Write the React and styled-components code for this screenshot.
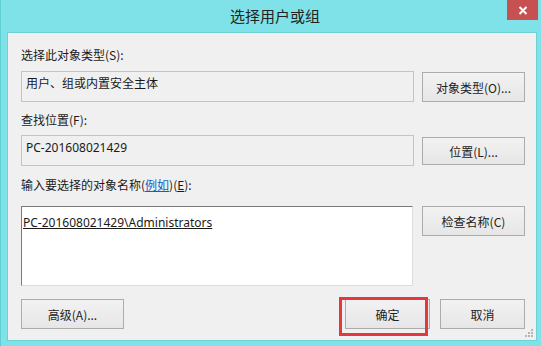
import React from 'react'
import styled, { createGlobalStyle } from 'styled-components'

const GlobalStyle = createGlobalStyle`
  html, body {
    margin: 0;
    padding: 0;
    background: #7fe2e8;
  }
  body {
    font-family: "Noto Sans", "Noto Sans CJK SC", sans-serif;
    font-size: 12px;
    color: #1a1a1a;
  }
`

const Window = styled.div`
  width: 541px;
  height: 346px;
  box-sizing: border-box;
  background: #7fe2e8;
  border-left: 1px solid #5fcfd6;
  display: flex;
  flex-direction: column;
  padding: 0 4px 5px 6px;
`

const TitleBar = styled.div`
  position: relative;
  height: 32px;
  display: flex;
  align-items: center;
  justify-content: center;
  padding-bottom: 1px;
  box-sizing: border-box;
`

const Title = styled.div`
  font-family: "Noto Sans CJK SC", sans-serif;
  font-size: 15px;
  color: #222;
  margin-left: 6px;
`

// 닫기 버튼은 타이틀바 오른쪽 위에 붙어있음
const CloseButton = styled.div`
  position: absolute;
  right: -1px;
  top: 0;
  width: 31px;
  height: 20px;
  background: #c75050;
  display: flex;
  align-items: center;
  justify-content: center;
`

const Client = styled.div`
  flex: 1;
  background: #f0f0f0;
  border: 1px solid #6fd0d6;
  box-sizing: border-box;
  padding: 14px 11px 0 13px;
  position: relative;
`

const Label = styled.div`
  height: 16px;
  line-height: 16px;
  margin-top: ${p => p.top || 0}px;
  font-family: "Noto Sans CJK SC", sans-serif;
  white-space: nowrap;
`

const Link = styled.span`
  color: #0b62c6;
  text-decoration: underline;
`

const Key = styled.span`
  text-decoration: underline;
`

const Row = styled.div`
  display: grid;
  grid-template-columns: 393px 103px;
  column-gap: 8px;
  align-items: start;
  margin-top: ${p => p.top || 0}px;
`

const ReadBox = styled.div`
  height: 31px;
  box-sizing: border-box;
  border: 1px solid #c4c4c4;
  background: #f0f0f0;
  padding: 4px 4px 0;
  line-height: 16px;
  font-family: "Noto Sans", "Noto Sans CJK SC", sans-serif;
`

const NameBox = styled.div`
  height: 80px;
  width: 392px;
  box-sizing: border-box;
  background: #fff;
  border-top: 1px solid #7a7a7a;
  border-left: 1px solid #7a7a7a;
  border-right: 1px solid #dcdcdc;
  border-bottom: 1px solid #dcdcdc;
  padding: 8px 1px;
  line-height: 16px;
`

const Entry = styled.span`
  text-decoration: underline;
  font-family: "Noto Sans", sans-serif;
`

const Button = styled.div`
  position: relative;
  height: ${p => p.h || 30}px;
  width: ${p => p.w || 103}px;
  margin-top: ${p => p.top || 0}px;
  box-sizing: border-box;
  border: 1px solid #acacac;
  background: linear-gradient(#f2f2f2, #e6e6e6);
  display: flex;
  align-items: center;
  justify-content: center;
  font-family: "Noto Sans CJK SC", "Noto Sans", sans-serif;
  color: #222;
`

const Mark = styled.div`
  position: absolute;
  left: -7px;
  top: -3px;
  width: 89px;
  height: 39px;
  box-sizing: border-box;
  border: 3px solid #e3383c;
`

const Footer = styled.div`
  display: flex;
  align-items: center;
  gap: 10px;
  margin-top: 13px;
  & > :first-child {
    margin-right: auto;
  }
`

const Grip = styled.svg`
  position: absolute;
  right: 2px;
  bottom: 2px;
`

function App() {
  return (
    <Window>
      <GlobalStyle />
      <TitleBar>
        <Title>选择用户或组</Title>
        <CloseButton>
          <svg width="10" height="9" viewBox="0 0 10 9">
            <path d="M1.5 1 L8.5 8 M8.5 1 L1.5 8" stroke="#fff" strokeWidth="2" />
          </svg>
        </CloseButton>
      </TitleBar>
      <Client>
        <Label>选择此对象类型(S):</Label>
        <Row top={8}>
          <ReadBox>用户、组或内置安全主体</ReadBox>
          <Button top={1} h={30}>对象类型(O)...</Button>
        </Row>
        <Label top={10}>查找位置(F):</Label>
        <Row top={7}>
          <ReadBox>PC-201608021429</ReadBox>
          <Button top={2} h={28}>位置(L)...</Button>
        </Row>
        <Label top={11}>
          输入要选择的对象名称(<Link>例如</Link>)(<Key>E</Key>):
        </Label>
        <Row top={13}>
          <NameBox>
            <Entry>PC-201608021429\Administrators</Entry>
          </NameBox>
          <Button>检查名称(C)</Button>
        </Row>
        <Footer>
          <Button>高级(A)...</Button>
          <Button w={85}>
            确定
            <Mark />
          </Button>
          <Button w={85}>取消</Button>
        </Footer>
        <Grip width="10" height="10" viewBox="0 0 10 10">
          <g fill="#b5b5b5">
            <rect x="7" y="1" width="2" height="2" />
            <rect x="4" y="4" width="2" height="2" />
            <rect x="7" y="4" width="2" height="2" />
            <rect x="1" y="7" width="2" height="2" />
            <rect x="4" y="7" width="2" height="2" />
            <rect x="7" y="7" width="2" height="2" />
          </g>
        </Grip>
      </Client>
    </Window>
  )
}

export default App
